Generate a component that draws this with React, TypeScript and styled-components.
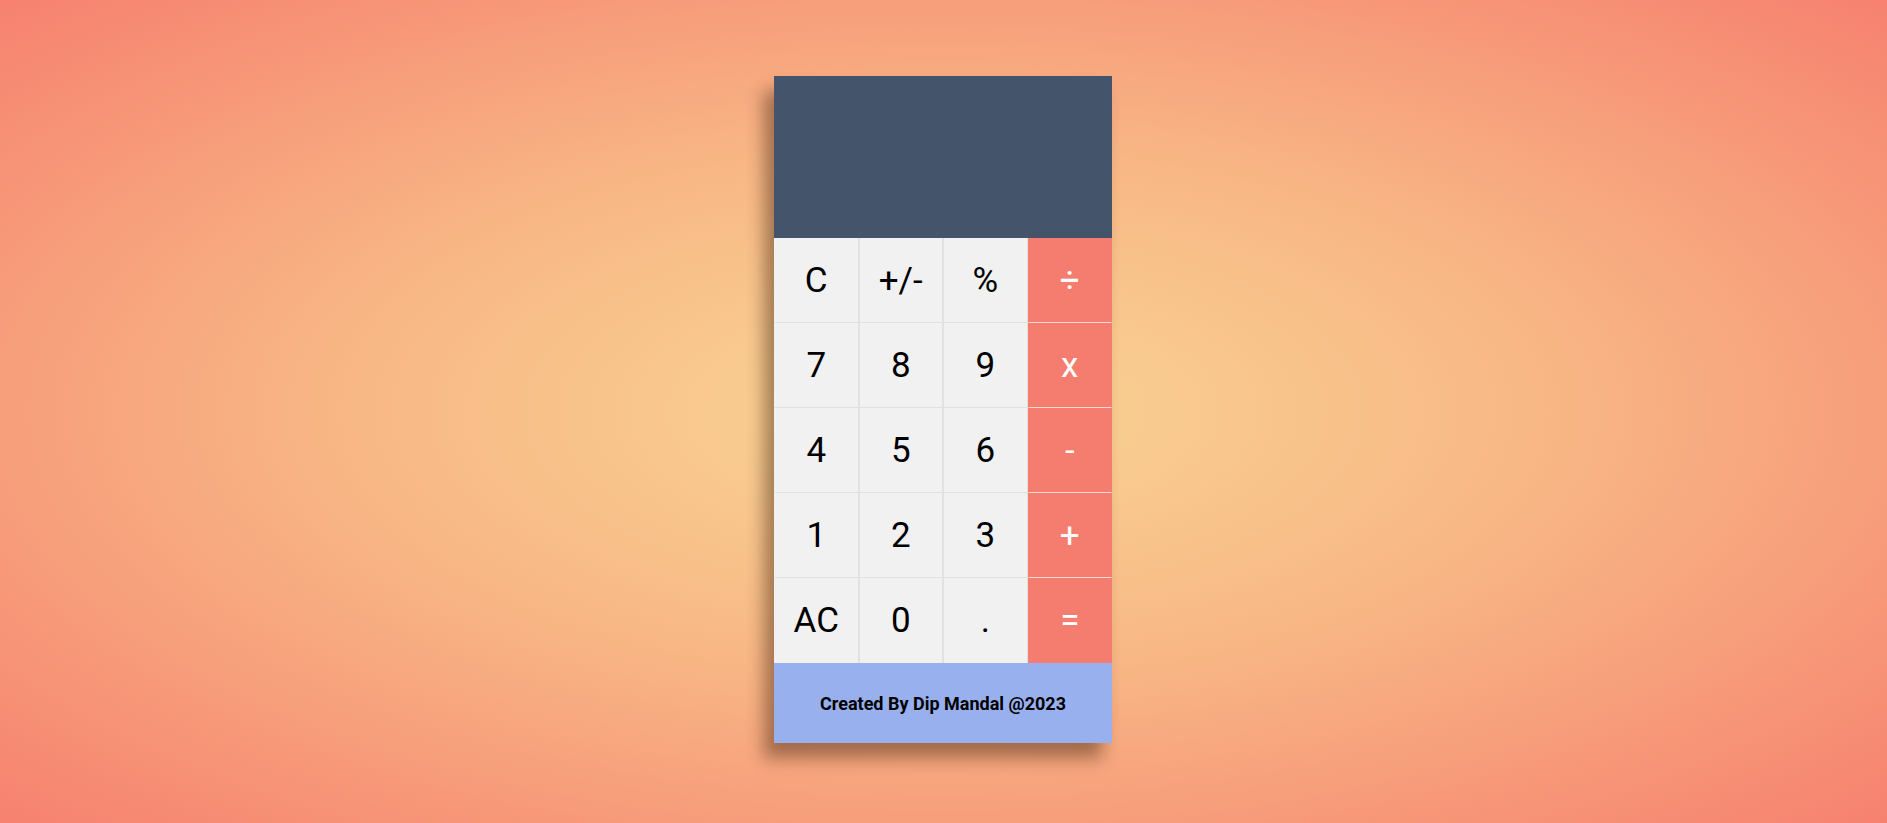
import React from "react";
import styled, { createGlobalStyle } from "styled-components";

const GlobalStyle = createGlobalStyle`
  html, body {
    margin: 0;
    padding: 0;
    height: 100%;
  }
  body {
    font-family: Roboto, "Liberation Sans", sans-serif;
    background: radial-gradient(ellipse at center, #f9d595 0%, #f8b785 45%, #f6816f 100%);
    background-attachment: fixed;
  }
  * {
    box-sizing: border-box;
  }
`;

const Page = styled.div`
  min-height: 823px;
  display: flex;
  justify-content: center;
  align-items: flex-start;
  padding-top: 76px;
  padding-right: 1px;
`;

const Calculator = styled.div`
  width: 338px;
  display: flex;
  flex-direction: column;
  box-shadow: -10px 15px 16px rgba(60, 30, 10, 0.45);
`;

const Display = styled.div`
  height: 162px;
  background-color: #44546b;
  color: #fff;
  display: flex;
  align-items: flex-end;
  justify-content: flex-end;
  padding: 16px;
  font-size: 48px;
`;

const Keypad = styled.div`
  display: grid;
  grid-template-columns: repeat(4, 1fr);
`;

const Key = styled.button<{ $operator?: boolean }>`
  height: 85px;
  border: none;
  border-left: 1px solid ${(p) => (p.$operator ? "#f47d70" : "#e1e1e1")};
  border-right: 1px solid ${(p) => (p.$operator ? "#f47d70" : "#e1e1e1")};
  border-bottom: 1px solid
    ${(p) => (p.$operator ? "rgba(255, 235, 230, 0.85)" : "#e1e1e1")};
  background-color: ${(p) => (p.$operator ? "#f47d70" : "#f1f1f1")};
  color: ${(p) => (p.$operator ? "#ffffff" : "#000000")};
  font-family: Roboto, "Liberation Sans", sans-serif;
  font-size: 35px;
  font-weight: 400;
  padding: 0;
  cursor: pointer;
  display: flex;
  align-items: center;
  justify-content: center;

  &:nth-child(4n + 1) {
    border-left-color: #f1f1f1;
  }

  &:nth-last-child(-n + 4) {
    border-bottom: none;
  }
`;

const Footer = styled.div`
  height: 80px;
  background-color: #99b0ee;
  display: flex;
  align-items: center;
  justify-content: center;
  font-size: 18px;
  font-weight: 700;
  color: #000;
`;

const keys: { label: string; op?: boolean }[] = [
  { label: "C" },
  { label: "+/-" },
  { label: "%" },
  { label: "÷", op: true },
  { label: "7" },
  { label: "8" },
  { label: "9" },
  { label: "x", op: true },
  { label: "4" },
  { label: "5" },
  { label: "6" },
  { label: "-", op: true },
  { label: "1" },
  { label: "2" },
  { label: "3" },
  { label: "+", op: true },
  { label: "AC" },
  { label: "0" },
  { label: "." },
  { label: "=", op: true },
];

const App: React.FC = () => {
  return (
    <>
      <GlobalStyle />
      <Page>
        <Calculator>
          <Display />
          <Keypad>
            {keys.map((k) => (
              <Key key={k.label} $operator={k.op}>
                {k.label}
              </Key>
            ))}
          </Keypad>
          <Footer>Created By Dip Mandal @2023</Footer>
        </Calculator>
      </Page>
    </>
  );
};

export default App;
